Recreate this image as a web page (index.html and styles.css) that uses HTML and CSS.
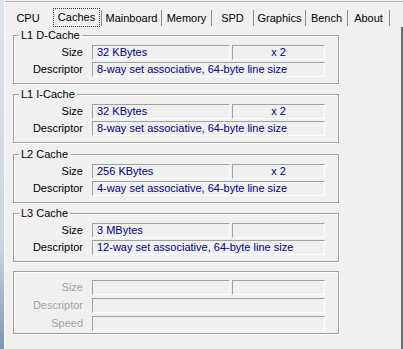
FILE: index.html
```html
<!DOCTYPE html>
<html lang="en">
<head>
  <meta charset="UTF-8" />
  <title>CPU-Z - Caches</title>
  <link rel="stylesheet" href="styles.css">
</head>
<body>
  <div class="window">
    <div class="edge"></div>
    <div class="main">
      <div class="tabs">
        <div class="tab tab-cpu">CPU</div>
        <div class="tab tab-caches active"><span>Caches</span></div>
        <div class="tab tab-mainboard">Mainboard</div>
        <div class="tab tab-memory">Memory</div>
        <div class="tab tab-spd">SPD</div>
        <div class="tab tab-graphics">Graphics</div>
        <div class="tab tab-bench">Bench</div>
        <div class="tab tab-about">About</div>
      </div>

      <div class="panel">
        <div class="group">
          <div class="group-title">L1 D-Cache</div>
          <div class="rows">
            <div class="row">
              <span class="label">Size</span>
              <span class="field field-size">32 KBytes</span>
              <span class="field field-count">x 2</span>
            </div>
            <div class="row">
              <span class="label">Descriptor</span>
              <span class="field field-wide">8-way set associative, 64-byte line size</span>
            </div>
          </div>
        </div>

        <div class="group">
          <div class="group-title">L1 I-Cache</div>
          <div class="rows">
            <div class="row">
              <span class="label">Size</span>
              <span class="field field-size">32 KBytes</span>
              <span class="field field-count">x 2</span>
            </div>
            <div class="row">
              <span class="label">Descriptor</span>
              <span class="field field-wide">8-way set associative, 64-byte line size</span>
            </div>
          </div>
        </div>

        <div class="group">
          <div class="group-title">L2 Cache</div>
          <div class="rows">
            <div class="row">
              <span class="label">Size</span>
              <span class="field field-size">256 KBytes</span>
              <span class="field field-count">x 2</span>
            </div>
            <div class="row">
              <span class="label">Descriptor</span>
              <span class="field field-wide">4-way set associative, 64-byte line size</span>
            </div>
          </div>
        </div>

        <div class="group">
          <div class="group-title">L3 Cache</div>
          <div class="rows">
            <div class="row">
              <span class="label">Size</span>
              <span class="field field-size">3 MBytes</span>
              <span class="field field-count"></span>
            </div>
            <div class="row">
              <span class="label">Descriptor</span>
              <span class="field field-wide">12-way set associative, 64-byte line size</span>
            </div>
          </div>
        </div>

        <div class="group group-blank">
          <div class="row">
            <span class="label">Size</span>
            <span class="field field-size"></span>
            <span class="field field-count"></span>
          </div>
          <div class="row">
            <span class="label">Descriptor</span>
            <span class="field field-wide"></span>
          </div>
          <div class="row">
            <span class="label">Speed</span>
            <span class="field field-wide"></span>
          </div>
        </div>
      </div>
    </div>
  </div>
</body>
</html>
```

FILE: styles.css
```css
* {
  box-sizing: border-box;
}

html,
body {
  margin: 0;
  height: 100%;
}

body {
  background-color: #f0f0f0;
  font-family: "Liberation Sans", Arial, sans-serif;
  font-size: 11px;
  color: #000;
}

.window {
  display: flex;
  height: 349px;
  overflow: hidden;
}

.edge {
  width: 5px;
  border-right: 1px solid #fafafa;
  background: linear-gradient(to bottom, #dde3ea, #cdd5df 70%, #7d94b8);
}

.main {
  flex: 1;
  display: flex;
  flex-direction: column;
}

/* tab strip */
.tabs {
  display: flex;
  align-items: flex-start;
  height: 26px;
  margin-top: 1px;
  padding-top: 8px;
  border-top: 1px solid #b4b4b4;
}

.tab {
  height: 16px;
  line-height: 16px;
  text-align: center;
  border-right: 1px solid #8c8c8c;
  white-space: nowrap;
}

.tab-cpu {
  width: 46px;
  border-right: 0;
}

.tab-caches { width: 51px; }
.tab-mainboard { width: 60px; }
.tab-memory { width: 50px; }
.tab-spd { width: 42px; }
.tab-graphics { width: 52px; }
.tab-bench { width: 42px; }
.tab-about { width: 42px; }

.tab.active span {
  display: block;
  height: 19px;
  margin: -2px 1px 0 2px;
  line-height: 17px;
  border: 1px dotted #333;
}

/* page panel */
.panel {
  flex: 1;
  padding: 8px 0 0 8px;
  border-right: 2px solid #6e6e6e;
}

.group {
  width: 326px;
  height: 49px;
  margin-top: 10.33px;
  border: 1px solid #a0a0a0;
  box-shadow: inset 1px 1px 0 #fff, 1px 1px 0 #fff;
}

.group:first-child {
  margin-top: 0;
}

.group-title {
  display: table;
  height: 13px;
  margin: -7px 0 0 5px;
  padding: 0 2px;
  line-height: 13px;
  background-color: #f0f0f0;
}

.rows {
  padding-top: 3px;
}

.row {
  display: flex;
  height: 15px;
  margin-bottom: 2px;
}

.label {
  width: 69px;
  margin-right: 9px;
  text-align: right;
  line-height: 15px;
}

.field {
  height: 15px;
  padding-left: 4px;
  line-height: 13px;
  color: #000080;
  white-space: nowrap;
  overflow: hidden;
  border: 1px solid;
  border-color: #a0a0a0 #fff #fff #a0a0a0;
}

.field-size {
  width: 138px;
}

.field-count {
  width: 93px;
  margin-left: 2px;
  padding-left: 0;
  text-align: center;
}

.field-wide {
  width: 233px;
}

.group-blank {
  height: 63px;
  margin-top: 9px;
  padding-top: 8px;
}

.group-blank .row {
  margin-bottom: 3px;
}

.group-blank .label {
  color: #a3a3a3;
}
```
